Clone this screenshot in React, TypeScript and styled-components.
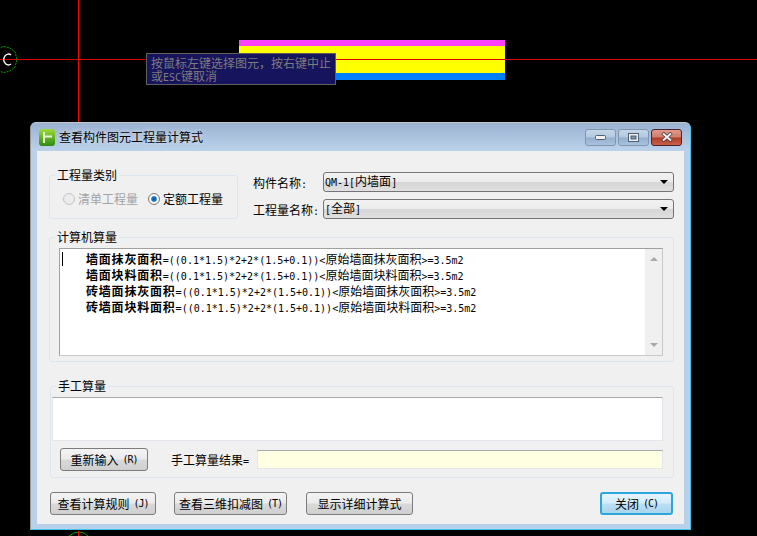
import * as React from 'react';
import styled, {createGlobalStyle} from 'styled-components';

const CJK = '"Noto Sans CJK SC", "Noto Sans", sans-serif';

const GlobalStyle = createGlobalStyle`
  html, body {
    margin: 0;
    padding: 0;
    background: #000;
  }
  body {
    font-family: ${CJK};
    font-size: 12px;
    color: #000;
  }
`;

const Desktop = styled.div`
  position: relative;
  width: 757px;
  height: 536px;
  overflow: hidden;
  background: #000;
`;

const Drawing = styled.svg`
  position: absolute;
  left: 0;
  top: 0;
`;

const Hint = styled.div`
  position: absolute;
  left: 146px;
  top: 53px;
  width: 190px;
  height: 32px;
  box-sizing: border-box;
  border: 1px solid #5f5f5f;
  background: #17145e;
  color: #7c7c7c;
  line-height: 13px;
  padding: 2px 0 0 4px;
  white-space: nowrap;
`;

const Latin = styled.span`
  font-family: "DejaVu Sans Mono", "Liberation Mono", monospace;
  font-size: 10px;
  font-weight: normal;
`;

const Hotkey = styled(Latin)`
  margin-left: 4px;
  letter-spacing: -1px;
`;

const Window = styled.div`
  position: absolute;
  left: 30px;
  top: 122px;
  width: 661px;
  height: 408px;
  box-sizing: border-box;
  display: flex;
  flex-direction: column;
  border-radius: 6px 6px 0 0;
  border-top: 1px solid #c8c8c8;
  border-left: 1px solid #9a9a9a;
  border-right: 1px solid #3fc6ea;
  border-bottom: 1px solid #3fc6ea;
  background: #b9d0ea;
`;

const TitleBar = styled.div`
  height: 28px;
  flex: none;
  display: flex;
  align-items: center;
  padding: 0 8px;
  background: linear-gradient(#9ab3d1, #bcd2eb);
  border-radius: 5px 5px 0 0;
`;

const Title = styled.div`
  flex: 1;
  margin-left: 4px;
  line-height: 16px;
  color: #000;
  text-shadow: 0 0 4px rgba(255, 255, 255, 0.7);
`;

const CaptionButton = styled.div<{ $close?: boolean }>`
  width: 31px;
  height: 17px;
  margin-left: 2px;
  box-sizing: border-box;
  display: flex;
  align-items: center;
  justify-content: center;
  border-radius: 3px;
  border: 1px solid ${props => (props.$close ? '#4a2230' : '#7f95b0')};
  background: ${props =>
    props.$close
      ? 'linear-gradient(#dc9a8c 0, #cf7e6c 48%, #b03c28 52%, #c9604a 100%)'
      : 'linear-gradient(#c6d6e8 0, #b4c9e0 48%, #93afcd 52%, #a9c3de 100%)'};
`;

const Client = styled.div`
  flex: 1;
  margin: 0 6px 5px 6px;
  padding: 17px 10px 0 12px;
  background: #f0f0f0;
  display: flex;
  flex-direction: column;
`;

const TopRow = styled.div`
  display: flex;
  height: 51px;
`;

const Group = styled.fieldset<{ $width?: number; $height: number; $inset?: number; $top?: number }>`
  margin: ${props => props.$top || 0}px 0 0 ${props => props.$inset || 0}px;
  padding: 0;
  box-sizing: border-box;
  flex: none;
  width: ${props => (props.$width ? props.$width + 'px' : 'auto')};
  height: ${props => props.$height}px;
  border: 1px solid #dbe4ef;
  border-radius: 3px;
  min-width: 0;
`;

const Legend = styled.legend`
  margin-left: 5px;
  padding: 0 2px;
  line-height: 14px;
  height: 14px;
`;

const RadioRow = styled.div`
  display: flex;
  align-items: center;
  padding: 9px 0 0 13px;
  height: 16px;
`;

const RadioDot = styled.span<{ $checked?: boolean }>`
  width: 12px;
  height: 12px;
  border-radius: 50%;
  box-sizing: border-box;
  flex: none;
  border: 1px solid ${props => (props.$checked ? '#7a7a7a' : '#c4c4c4')};
  background: ${props =>
    props.$checked
      ? 'radial-gradient(circle, #0a4f9c 0, #1c78cc 32%, #fff 50%, #e8e8e8 100%)'
      : '#ececec'};
`;

const RadioLabel = styled.span<{ $disabled?: boolean }>`
  margin-left: 3px;
  margin-right: ${props => (props.$disabled ? 10 : 0)}px;
  line-height: 16px;
  white-space: nowrap;
  color: ${props => (props.$disabled ? '#a3a3a3' : '#000')};
`;

const Fields = styled.div`
  width: 421px;
  margin: 4px 0 0 15px;
  display: flex;
  flex-direction: column;
  gap: 7px;
`;

const Field = styled.div`
  display: flex;
  align-items: center;
  height: 20px;
`;

const FieldLabel = styled.div`
  width: 70px;
  flex: none;
  white-space: nowrap;
`;

const Select = styled.div`
  flex: 1;
  height: 20px;
  box-sizing: border-box;
  display: flex;
  align-items: center;
  justify-content: space-between;
  padding: 0 5px 0 1px;
  border: 1px solid #757575;
  border-radius: 3px;
  line-height: 18px;
  background: linear-gradient(#f2f2f2 0, #ebebeb 48%, #d6d6d6 52%, #e0e0e0 100%);
`;

const Arrow = styled.span`
  width: 0;
  height: 0;
  border-left: 4px solid transparent;
  border-right: 4px solid transparent;
  border-top: 4px solid #000;
`;

const Results = styled.div`
  position: relative;
  margin: 4px 10px 0 9px;
  height: 108px;
  box-sizing: border-box;
  border: 1px solid #a0a0a0;
  border-right-color: #c8c8c8;
  border-bottom-color: #c8c8c8;
  background: #fff;
  padding: 2px 0 0 26px;
  display: flex;
  justify-content: space-between;
`;

const Caret = styled.span`
  position: absolute;
  left: 2px;
  top: 3px;
  width: 1px;
  height: 14px;
  background: #000;
`;

const Lines = styled.div`
  display: flex;
  flex-direction: column;
`;

const FormulaLine = styled.div`
  height: 16px;
  line-height: 15px;
  white-space: nowrap;
`;

const FormulaName = styled.b`
  font-weight: 700;
  letter-spacing: 0.8px;
`;

const ScrollBar = styled.div`
  width: 17px;
  margin: -2px 0 0 0;
  background: #f0f0f0;
  display: flex;
  flex-direction: column;
  justify-content: space-between;
  align-items: center;
  padding: 8px 0;
  box-sizing: border-box;
`;

const ScrollArrow = styled.span<{ $down?: boolean }>`
  width: 0;
  height: 0;
  border-left: 4px solid transparent;
  border-right: 4px solid transparent;
  ${props => (props.$down ? 'border-top' : 'border-bottom')}: 4px solid #a8a8a8;
`;

const ManualInput = styled.div`
  margin: 4px 10px 0 1px;
  height: 44px;
  box-sizing: border-box;
  background: #fff;
  border: 1px solid #e2e6ec;
  border-top-color: #a8a8a8;
`;

const ManualRow = styled.div`
  display: flex;
  align-items: center;
  margin: 7px 10px 0 9px;
  height: 23px;
`;

const ManualLabel = styled.div`
  margin-left: 23px;
  width: 86px;
  flex: none;
  white-space: nowrap;
`;

const ResultBox = styled.div`
  flex: 1;
  height: 19px;
  box-sizing: border-box;
  background: #ffffe1;
  border: 1px solid #e4e6ea;
  border-top-color: #a8a8a8;
`;

const Button = styled.div<{ $width: number; $gap?: number }>`
  width: ${props => props.$width}px;
  margin-left: ${props => props.$gap || 0}px;
  height: 23px;
  flex: none;
  box-sizing: border-box;
  display: flex;
  align-items: center;
  justify-content: center;
  border: 1px solid #7c7c7c;
  border-radius: 3px;
  white-space: nowrap;
  line-height: 21px;
  background: linear-gradient(#f3f3f3 0, #ebebeb 48%, #d9d9d9 52%, #cfcfcf 100%);
`;

const DefaultButton = styled(Button)`
  border: 2px solid #2ea6dc;
  background: linear-gradient(#e6f5fd 0, #d3ecfa 48%, #bcdff2 52%, #a9d5ee 100%);
`;

const Actions = styled.div`
  display: flex;
  margin-top: 14px;
  margin-left: 1px;
`;

const formulas = [
  {name: '墙面抹灰面积', source: '原始墙面抹灰面积'},
  {name: '墙面块料面积', source: '原始墙面块料面积'},
  {name: '砖墙面抹灰面积', source: '原始墙面抹灰面积'},
  {name: '砖墙面块料面积', source: '原始墙面块料面积'},
];

const CadDrawing = () => (
  <Drawing width={757} height={536}>
    <rect x={239} y={40} width={266} height={6} fill="#ff40ff" />
    <rect x={239} y={46} width={266} height={27} fill="#ffff00" />
    <rect x={239} y={73} width={266} height={7} fill="#0080ff" />
    <line x1={0} y1={59.5} x2={757} y2={59.5} stroke="#e00000" />
    <line x1={78.5} y1={0} x2={78.5} y2={122} stroke="#ff0000" />
    <polygon
      points="4,46.5 10,48 15,52 17,59.5 15,67 10,71 4,72.5 -2,71 -7,67 -9,59.5 -7,52 -2,48"
      fill="none"
      stroke="#00a000"
      strokeDasharray="2 1"
    />
    <path d="M11 55 A4.5 5.5 0 1 0 11 64" fill="none" stroke="#fff" strokeWidth={1.3} />
    <polyline points="69,536 74,533 79,532 84,533 88,536" fill="none" stroke="#00a000" />
    <line x1={78.5} y1={531} x2={78.5} y2={536} stroke="#ff0000" />
  </Drawing>
);

const AppIcon = () => (
  <svg width={16} height={17} viewBox="0 0 16 17">
    <defs>
      <linearGradient id="appGreen" x1="0" y1="0" x2="0" y2="1">
        <stop offset="0" stopColor="#9fdc3a" />
        <stop offset="1" stopColor="#2f8a10" />
      </linearGradient>
    </defs>
    <rect width={16} height={17} rx={3} fill="url(#appGreen)" />
    <path d="M5 3 V14 M5 7.5 H13" stroke="#e8f4d8" strokeWidth={2} fill="none" />
  </svg>
);

const MinimizeIcon = () => (
  <svg width={11} height={5} viewBox="0 0 11 5">
    <rect x={0.5} y={0.5} width={10} height={4} rx={1} fill="#f0f0f0" stroke="#4e5f75" />
  </svg>
);

const MaximizeIcon = () => (
  <svg width={11} height={9} viewBox="0 0 11 9">
    <rect x={0.5} y={0.5} width={10} height={8} fill="#f0f0f0" stroke="#4e5f75" />
    <rect x={3} y={3} width={5} height={3} fill="#7f95ae" stroke="#4e5f75" />
  </svg>
);

const CloseIcon = () => (
  <svg width={12} height={10} viewBox="0 0 12 10">
    <path d="M1.5 1 L10.5 9 M10.5 1 L1.5 9" stroke="#4a3a3a" strokeWidth={3.5} />
    <path d="M2 1.5 L10 8.5 M10 1.5 L2 8.5" stroke="#f4f4f4" strokeWidth={2} />
  </svg>
);

const App: React.FC = () => (
  <Desktop>
    <GlobalStyle />
    <CadDrawing />
    <Hint>
      按鼠标左键选择图元{'\uFF0C'}按右键中止
      <br />
      或<Latin>ESC</Latin>键取消
    </Hint>
    <Window>
      <TitleBar>
        <AppIcon />
        <Title>查看构件图元工程量计算式</Title>
        <CaptionButton><MinimizeIcon /></CaptionButton>
        <CaptionButton><MaximizeIcon /></CaptionButton>
        <CaptionButton $close><CloseIcon /></CaptionButton>
      </TitleBar>
      <Client>
        <TopRow>
          <Group $width={189} $height={51}>
            <Legend>工程量类别</Legend>
            <RadioRow>
              <RadioDot />
              <RadioLabel $disabled>清单工程量</RadioLabel>
              <RadioDot $checked />
              <RadioLabel>定额工程量</RadioLabel>
            </RadioRow>
          </Group>
          <Fields>
            <Field>
              <FieldLabel>构件名称<Latin>:</Latin></FieldLabel>
              <Select>
                <span><Latin>QM-1[</Latin>内墙面<Latin>]</Latin></span>
                <Arrow />
              </Select>
            </Field>
            <Field>
              <FieldLabel>工程量名称<Latin>:</Latin></FieldLabel>
              <Select>
                <span><Latin>[</Latin>全部<Latin>]</Latin></span>
                <Arrow />
              </Select>
            </Field>
          </Fields>
        </TopRow>
        <Group $height={132} $top={11}>
          <Legend>计算机算量</Legend>
          <Results>
            <Caret />
            <Lines>
              {formulas.map(item => (
                <FormulaLine key={item.name}>
                  <FormulaName>{item.name}</FormulaName>
                  <Latin>=((0.1*1.5)*2+2*(1.5+0.1))&lt;</Latin>
                  {item.source}
                  <Latin>&gt;=3.5m2</Latin>
                </FormulaLine>
              ))}
            </Lines>
            <ScrollBar>
              <ScrollArrow />
              <ScrollArrow $down />
            </ScrollBar>
          </Results>
        </Group>
        <Group $height={99} $inset={1} $top={17}>
          <Legend>手工算量</Legend>
          <ManualInput />
          <ManualRow>
            <Button $width={88}>重新输入<Hotkey>(R)</Hotkey></Button>
            <ManualLabel>手工算量结果<Latin>=</Latin></ManualLabel>
            <ResultBox />
          </ManualRow>
        </Group>
        <Actions>
          <Button $width={106}>查看计算规则<Hotkey>(J)</Hotkey></Button>
          <Button $width={113} $gap={18}>查看三维扣减图<Hotkey>(T)</Hotkey></Button>
          <Button $width={107} $gap={19}>显示详细计算式</Button>
          <DefaultButton $width={73} $gap={187}>关闭<Hotkey>(C)</Hotkey></DefaultButton>
        </Actions>
      </Client>
    </Window>
  </Desktop>
);

export default App;
